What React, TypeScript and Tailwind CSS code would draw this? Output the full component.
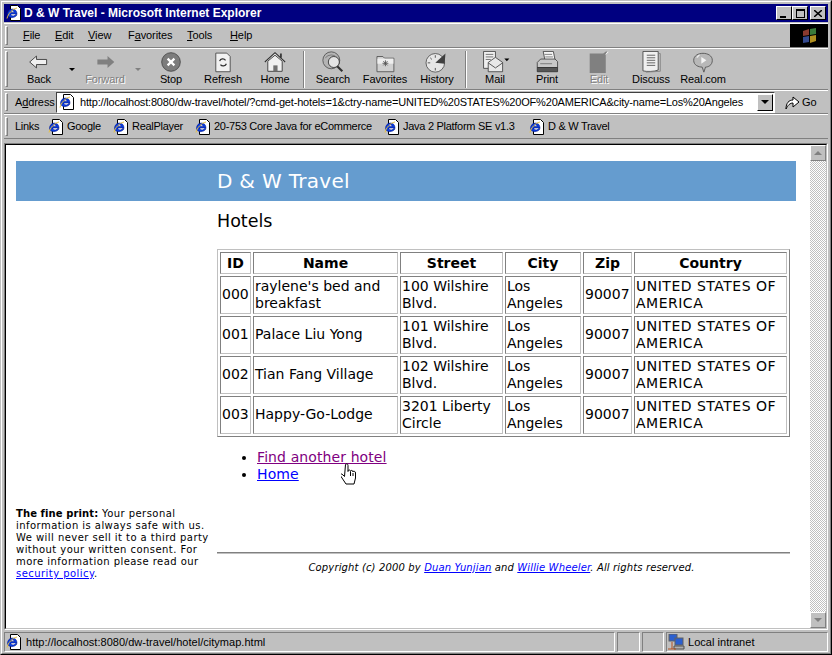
const ui = "font-['Liberation_Sans',Arial,sans-serif]";
const raised = "border border-t-white border-l-white border-b-[#808080] border-r-[#808080]";
const sunken = "border border-t-[#808080] border-l-[#808080] border-b-white border-r-white";

function IeIcon({ page = true }: { page?: boolean }) {
  return (
    <svg width="16" height="16" viewBox="0 0 16 16" className="shrink-0">
      {page && <path d="M4.500 .5h7l3 3v12h-10z" fill="#fff" stroke="#000" />}
      <path d="M1.500 9.500c0-3.300 2.200-5.500 5-5.500s4.500 2.200 4.500 5H4.800c0 2 3.500 2.800 4.700.6h1.600c-1.500 4.200-9.600 3.900-9.600-.1z M4.800 7.500h3.400c-.2-2-3.200-2-3.400 0z" fill="#0a3ce0" stroke="#00107a" strokeWidth=".5" />
      <path d="M1 13.500c1-4.500 5-9.500 10-10.500" fill="none" stroke="#e8c040" strokeWidth="1" />
    </svg>
  );
}

function Grip() {
  return <div className={`w-[3px] self-stretch my-[2px] shrink-0 ${raised}`} />;
}

function ToolIcon({ name }: { name: string }) {
  const common = { width: 34, height: 22, viewBox: "0 0 34 26" };
  switch (name) {
    case "Back":
      return (
        <svg {...common}>
          <path d="M6 13l8-7v4h12v6H14v4z" fill="#f0f0f0" stroke="#303030" />
        </svg>
      );
    case "Forward":
      return (
        <svg {...common}>
          <path d="M28 13l-8-7v4H8v6h12v4z" fill="#808080" />
        </svg>
      );
    case "Stop":
      return (
        <svg {...common}>
          <circle cx="17" cy="13" r="11" fill="#7c7c7c" stroke="#444" />
          <path d="M13 9l8 8M21 9l-8 8" stroke="#fff" strokeWidth="2.600" />
        </svg>
      );
    case "Refresh":
      return (
        <svg {...common}>
          <path d="M8.500 2.500h13l4 4v18h-17z" fill="#f2f2f2" stroke="#404040" />
          <path d="M13 12a4 4 0 0 1 7-1M21 15a4 4 0 0 1-7 1" fill="none" stroke="#303030" strokeWidth="1.500" />
        </svg>
      );
    case "Home":
      return (
        <svg {...common}>
          <path d="M5 13L17 2l12 11" fill="#e0e0e0" stroke="#303030" strokeWidth="1.300" />
          <path d="M8.500 12v12h17V12L17 5z" fill="#f0f0f0" stroke="#303030" />
          <path d="M24 3v5" stroke="#303030" strokeWidth="2" />
          <rect x="15" y="17" width="5" height="7" fill="#707070" />
        </svg>
      );
    case "Search":
      return (
        <svg {...common}>
          <circle cx="15" cy="11" r="10" fill="#b4b4b4" stroke="#505050" />
          <circle cx="18" cy="13" r="6.500" fill="#e4e4e4" stroke="#303030" />
          <path d="M22 18l6 6" stroke="#303030" strokeWidth="2.500" />
          <path d="M8 8a9 9 0 0 1 14 0" fill="none" stroke="#707070" />
        </svg>
      );
    case "Favorites":
      return (
        <svg {...common}>
          <path d="M7.500 6.500h7l2 2h11v16h-20z" fill="#d0d0d0" stroke="#505050" />
          <path d="M8 9h19v6H8z" fill="#eee" />
          <path d="M17.500 11v7M14 14.500h7M15 12l5 5M20 12l-5 5" stroke="#505050" />
        </svg>
      );
    case "History":
      return (
        <svg {...common}>
          <circle cx="15" cy="14" r="11" fill="#e6e6e6" stroke="#505050" />
          <path d="M15 14L27 3l-1 12z" fill="#404040" />
          <path d="M15 5v3M6 14h3M15 20v3M9 8l2 2" stroke="#404040" />
        </svg>
      );
    case "Mail":
      return (
        <svg {...common}>
          <path d="M3.500 .5h14v20h-14z" fill="#f0f0f0" stroke="#404040" />
          <path d="M6 4h9M6 7h9M6 10h6" stroke="#606060" />
          <path d="M9 13.500l8.500-6 8.500 6v11H9z" fill="#e8e8e8" stroke="#404040" />
          <path d="M9 14l8.500 6 8.500-6" fill="none" stroke="#404040" />
          <path d="M28 9h6l-3 3z" fill="#000" />
        </svg>
      );
    case "Print":
      return (
        <svg {...common}>
          <path d="M12.500 .5h12l2 10h-12z" fill="#f4f4f4" stroke="#404040" />
          <path d="M14 4h9M15 7h9" stroke="#707070" />
          <path d="M5.500 13.500l4-4h17l3 3v7h-24z" fill="#c8c8c8" stroke="#404040" />
          <path d="M5.500 19.500h24v5h-24z" fill="#555" stroke="#333" />
          <path d="M9 15h14" stroke="#707070" />
        </svg>
      );
    case "Edit":
      return (
        <svg {...common}>
          <path d="M6 3h16l4-3v2l-1 1v23H6z" fill="#808080" />
          <path d="M25 4l3-3" stroke="#fff" />
        </svg>
      );
    case "Discuss":
      return (
        <svg {...common}>
          <path d="M7.500 .5h18v22c-4 2-14 2-18 1z" fill="#f0f0f0" stroke="#404040" />
          <path d="M12 5h10M12 8h10M12 11h10M12 14h10M12 17h10" stroke="#505050" />
          <path d="M26.500 3h1.500v21l-17 1" fill="none" stroke="#808080" />
        </svg>
      );
    default:
      return (
        <svg {...common}>
          <path d="M6 11c0-11 22-11 22 0 0 6-5 8-8 8l-2 6-2-6c-4 0-10-2-10-8z" fill="#b8b8b8" stroke="#505050" />
          <path d="M15 7l6 4-6 4z" fill="#f4f4f4" />
          <path d="M10 8c0-1 2-3 3-3" stroke="#eee" fill="none" strokeWidth="1.500" />
        </svg>
      );
  }
}

function ToolButton({ name, disabled }: { name: string; disabled?: boolean }) {
  return (
    <div className="w-[52px] shrink-0 flex flex-col items-center">
      <ToolIcon name={name} />
      <span className={`text-[11px] leading-[13px] tracking-[-0.1px] ${disabled ? "text-[#808080] [text-shadow:1px_1px_0_#fff]" : "text-black"}`}>
        {name}
      </span>
    </div>
  );
}

function Arrow({ disabled }: { disabled?: boolean }) {
  return (
    <div className="w-[14px] shrink-0 flex justify-center pt-[17px] self-start">
      <div className={`w-0 h-0 border-x-[3px] border-x-transparent border-t-[3px] ${disabled ? "border-t-[#808080]" : "border-t-black"}`} />
    </div>
  );
}

function ToolSep() {
  return <div className="w-[2px] mx-[2px] h-[37px] shrink-0 border-l border-l-[#808080] border-r border-r-white" />;
}

function WinButton({ children, className = "" }: { children: React.ReactNode; className?: string }) {
  return (
    <div className={`w-4 h-[14px] bg-[#c0c0c0] border border-t-white border-l-white border-b-black border-r-black flex items-center justify-center ${className}`}>
      {children}
    </div>
  );
}

const hotels = [
  { id: "000", name: "raylene's bed and breakfast", street: "100 Wilshire Blvd." },
  { id: "001", name: "Palace Liu Yong", street: "101 Wilshire Blvd." },
  { id: "002", name: "Tian Fang Village", street: "102 Wilshire Blvd." },
  { id: "003", name: "Happy-Go-Lodge", street: "3201 Liberty Circle" },
];

const cell = "border border-t-[#808080] border-l-[#808080] border-b-[#c0c0c0] border-r-[#c0c0c0] p-px";
// one-line cells sit a pixel higher in their row
const single = "pt-0 pb-[2px]";

const links = [
  { label: "Google", w: "w-[65px]" },
  { label: "RealPlayer", w: "w-[82px]" },
  { label: "20-753 Core Java for eCommerce", w: "w-[189px]" },
  { label: "Java 2 Platform SE v1.3", w: "w-[145px]" },
  { label: "D & W Travel", w: "w-[100px]" },
];

export default function App() {
  return (
    <div className={`w-[832px] h-[655px] overflow-hidden bg-[#c0c0c0] relative flex flex-col border border-t-[#c0c0c0] border-l-[#c0c0c0] border-b-black border-r-black ${ui}`}>
      <div className="flex-1 min-h-0 flex flex-col border border-t-white border-l-white border-b-[#808080] border-r-[#808080] p-[2px] pb-[1px]">
        {/* title bar */}
        <div className="h-[18px] shrink-0 bg-[#000080] flex items-center pl-[2px] pr-[2px]">
          <IeIcon />
          <span className="ml-[2px] text-white font-bold text-[12px] leading-none">D &amp; W Travel - Microsoft Internet Explorer</span>
          <div className="ml-auto flex">
            <WinButton>
              <div className="w-[6px] h-[2px] bg-black mt-[7px] -ml-[2px]" />
            </WinButton>
            <WinButton>
              <div className="w-[9px] h-[9px] border border-black border-t-2" />
            </WinButton>
            <WinButton className="ml-[2px]">
              <svg width="8" height="7" viewBox="0 0 8 7">
                <path d="M0 0l8 7M8 0L0 7" stroke="#000" strokeWidth="1.500" />
              </svg>
            </WinButton>
          </div>
        </div>

        {/* menu */}
        <div className="h-[25px] mt-px shrink-0 flex border-t border-t-white border-b border-b-[#808080] pl-[1px]">
          <Grip />
          <div className="flex items-center text-[11px] tracking-[-0.1px] text-black">
            <span className="ml-[15px] w-[32px]"><u>F</u>ile</span>
            <span className="w-[33px]"><u>E</u>dit</span>
            <span className="w-[40px]"><u>V</u>iew</span>
            <span className="w-[59px]">F<u>a</u>vorites</span>
            <span className="w-[43px]"><u>T</u>ools</span>
            <span><u>H</u>elp</span>
          </div>
          <div className="ml-auto w-[38px] bg-black flex items-center justify-center">
            <svg width="18" height="18" viewBox="0 0 18 18">
              <path d="M3 4l6-2v6l-6 1z" fill="#8a3a30" />
              <path d="M10 2l6-1v6l-6 1z" fill="#3a7a3a" />
              <path d="M3 10l6-1v6l-6 1z" fill="#344a90" />
              <path d="M10 9l6-1v6l-6 2z" fill="#b09020" />
            </svg>
          </div>
        </div>

        {/* toolbar */}
        <div className="h-[42px] shrink-0 flex border-t border-t-white border-b border-b-[#808080] pl-[1px]">
          <Grip />
          <div className="flex items-start pt-[2px] pl-[5px]">
            <ToolButton name="Back" />
            <Arrow />
            <ToolButton name="Forward" disabled />
            <Arrow disabled />
            <ToolButton name="Stop" />
            <ToolButton name="Refresh" />
            <ToolButton name="Home" />
            <ToolSep />
            <ToolButton name="Search" />
            <ToolButton name="Favorites" />
            <ToolButton name="History" />
            <ToolSep />
            <ToolButton name="Mail" />
            <ToolButton name="Print" />
            <ToolButton name="Edit" disabled />
            <ToolButton name="Discuss" />
            <ToolButton name="Real.com" />
          </div>
        </div>

        {/* address */}
        <div className="h-[24px] shrink-0 flex items-center border-t border-t-white border-b border-b-[#808080] pl-[1px] text-[11px] tracking-[-0.1px] text-black">
          <Grip />
          <span className="ml-[7px] w-[41px] shrink-0">A<u>d</u>dress</span>
          <div className="w-[719px] h-[21px] shrink-0 bg-white flex items-center border border-t-[#404040] border-l-[#404040] border-b-white border-r-white pl-[2px] pr-px">
            <IeIcon />
            <span className="ml-[5px] whitespace-nowrap tracking-[-0.18px]">
              http://localhost:8080/dw-travel/hotel/?cmd-get-hotels=1&amp;ctry-name=UNITED%20STATES%20OF%20AMERICA&amp;city-name=Los%20Angeles
            </span>
            <div className="ml-auto w-4 h-[17px] bg-[#c0c0c0] border border-t-white border-l-white border-b-black border-r-black flex items-center justify-center">
              <div className="w-0 h-0 border-x-[4px] border-x-transparent border-t-[4px] border-t-black" />
            </div>
          </div>
          <div className="ml-[10px] flex items-center gap-[2px]">
            <svg width="15" height="16" viewBox="0 0 15 16">
              <path d="M1 15c0-6 3-9 7-9V3l6 5-6 5V9c-3 0-5 2-7 6z" fill="#fff" stroke="#000" />
            </svg>
            <span>Go</span>
          </div>
        </div>

        {/* links */}
        <div className="h-[25px] shrink-0 flex items-center border-t border-t-white border-b border-b-[#808080] pl-[1px] text-[11px] tracking-[-0.28px] text-black">
          <Grip />
          <span className="ml-[7px] w-[33px] shrink-0">Links</span>
          {links.map((l) => (
            <div key={l.label} className={`flex items-center gap-[3px] shrink-0 whitespace-nowrap ${l.w}`}>
              <IeIcon />
              <span>{l.label}</span>
            </div>
          ))}
        </div>

        {/* page frame */}
        <div className="flex-1 min-h-0 mt-[4px] flex border border-t-[#808080] border-l-[#808080] border-b-white border-r-white">
          <div className="flex-1 min-w-0 flex border border-t-black border-l-black border-b-[#c0c0c0] border-r-[#c0c0c0]">
            <div className="flex-1 min-w-0 bg-white font-['DejaVu_Sans',Verdana,sans-serif] text-black pl-[10px] pt-[16px]">
              <div className="w-[780px] h-[40px] bg-[#659ccf] flex items-center pl-[201px] text-white text-[20px] tracking-[0.3px]">
                D &amp; W Travel
              </div>
              <div className="flex w-[774px]">
                <div className="w-[201px] shrink-0 flex flex-col justify-end -mb-[1px]">
                  <p className="w-[198px] text-[10px] leading-[12px] tracking-[0.45px]">
                    <b className="tracking-[0.1px]">The fine print:</b> Your personal information is always safe with us. We will never sell it to a third party without your written consent. For more information please read our{" "}
                    <a className="text-[#0000ff] underline">security policy</a>.
                  </p>
                </div>
                <div className="flex-1 min-w-0">
                  <h1 className="text-[17.500px] leading-[22px] mt-[9px] font-normal">Hotels</h1>
                  <table className="mt-[17px] w-[573px] table-fixed border-separate border-spacing-[2px] border border-t-[#c0c0c0] border-l-[#c0c0c0] border-b-[#808080] border-r-[#808080] text-[14px] leading-[17px]">
                    <colgroup>
                      <col className="w-[31px]" />
                      <col className="w-[145px]" />
                      <col className="w-[103px]" />
                      <col className="w-[76px]" />
                      <col className="w-[49px]" />
                      <col className="w-[153px]" />
                    </colgroup>
                    <thead>
                      <tr>
                        {["ID", "Name", "Street", "City", "Zip", "Country"].map((h) => (
                          <th key={h} className={`${cell} font-bold text-center h-[22px]`}>{h}</th>
                        ))}
                      </tr>
                    </thead>
                    <tbody>
                      {hotels.map((h) => (
                        <tr key={h.id}>
                          <td className={`${cell} ${single}`}>{h.id}</td>
                          <td className={h.id === "000" ? cell : `${cell} ${single}`}>{h.name}</td>
                          <td className={cell}>{h.street}</td>
                          <td className={cell}>Los Angeles</td>
                          <td className={`${cell} ${single}`}>90007</td>
                          <td className={`${cell} tracking-[0.5px]`}>UNITED STATES OF AMERICA</td>
                        </tr>
                      ))}
                    </tbody>
                  </table>
                  <ul className="mt-[12px] pl-[40px] list-disc text-[14px] leading-[17px] tracking-[0.1px]">
                    <li><a className="text-[#800080] underline">Find another hotel</a></li>
                    <li><a className="text-[#0000ff] underline">Home</a></li>
                  </ul>
                  <div className="mt-[69px] h-[2px] w-[573px] bg-[#808080] border-b border-b-[#c0c0c0]" />
                  <p className="mt-[8px] pr-[4px] text-center text-[10px] leading-[12px] italic tracking-[0.14px] mb-[5px]">
                    Copyright (c) 2000 by <a className="text-[#0000ff] underline">Duan Yunjian</a> and <a className="text-[#0000ff] underline">Willie Wheeler</a>. All rights reserved.
                  </p>
                </div>
              </div>
            </div>
            {/* scrollbar */}
            <div className="w-4 shrink-0 flex flex-col bg-[repeating-conic-gradient(#c0c0c0_0_25%,#fff_0_50%)] bg-[length:2px_2px]">
              <div className={`w-4 h-4 bg-[#c0c0c0] ${raised} flex items-center justify-center`}>
                <div className="w-0 h-0 border-x-[4px] border-x-transparent border-b-[4px] border-b-[#808080]" />
              </div>
              <div className={`mt-auto w-4 h-4 bg-[#c0c0c0] ${raised} flex items-center justify-center`}>
                <div className="w-0 h-0 border-x-[4px] border-x-transparent border-t-[4px] border-t-[#808080]" />
              </div>
            </div>
          </div>
        </div>

        {/* status bar */}
        <div className="h-[20px] mt-[2px] shrink-0 flex text-[11px] tracking-[0.03px] text-black gap-[2px]">
          <div className={`flex-1 min-w-0 flex items-center pl-px ${sunken}`}>
            <IeIcon />
            <span className="ml-[4px]">http://localhost:8080/dw-travel/hotel/citymap.html</span>
          </div>
          <div className={`w-[23px] shrink-0 ${sunken}`} />
          <div className={`w-[22px] shrink-0 ${sunken}`} />
          <div className={`w-[162px] shrink-0 flex items-center pl-[1px] gap-[3px] ${sunken}`}>
            <svg width="17" height="17" viewBox="0 0 17 17">
              <rect x="1" y="0" width="8" height="7" fill="#2a5fd0" stroke="#606060" />
              <rect x="7" y="4" width="8" height="7" fill="#2a5fd0" stroke="#606060" />
              <path d="M6 12h10v3H6z" fill="#b0b0b0" stroke="#505050" />
              <path d="M4 8v7M0 15h8" stroke="#b05020" />
            </svg>
            <span>Local intranet</span>
          </div>
        </div>
      </div>

      {/* hand cursor over the link */}
      <svg width="18" height="22" viewBox="0 0 18 22" className="absolute left-[340px] top-[462px]">
        <path d="M4.500 1.500c1-1 2.500-1 2.500 1v6c0-2 2.500-2 2.500 0 0-1.500 2.500-1.500 2.500.5 0-1.500 2.500-1 2.500 1v5l-1.500 6h-8l-4-6-2-3c0-1.500 1.500-1.500 3 0l1.500 1.500z" fill="#fff" stroke="#000" />
        <path d="M9.500 9v4M12 10v3" stroke="#000" />
      </svg>
    </div>
  );
}
